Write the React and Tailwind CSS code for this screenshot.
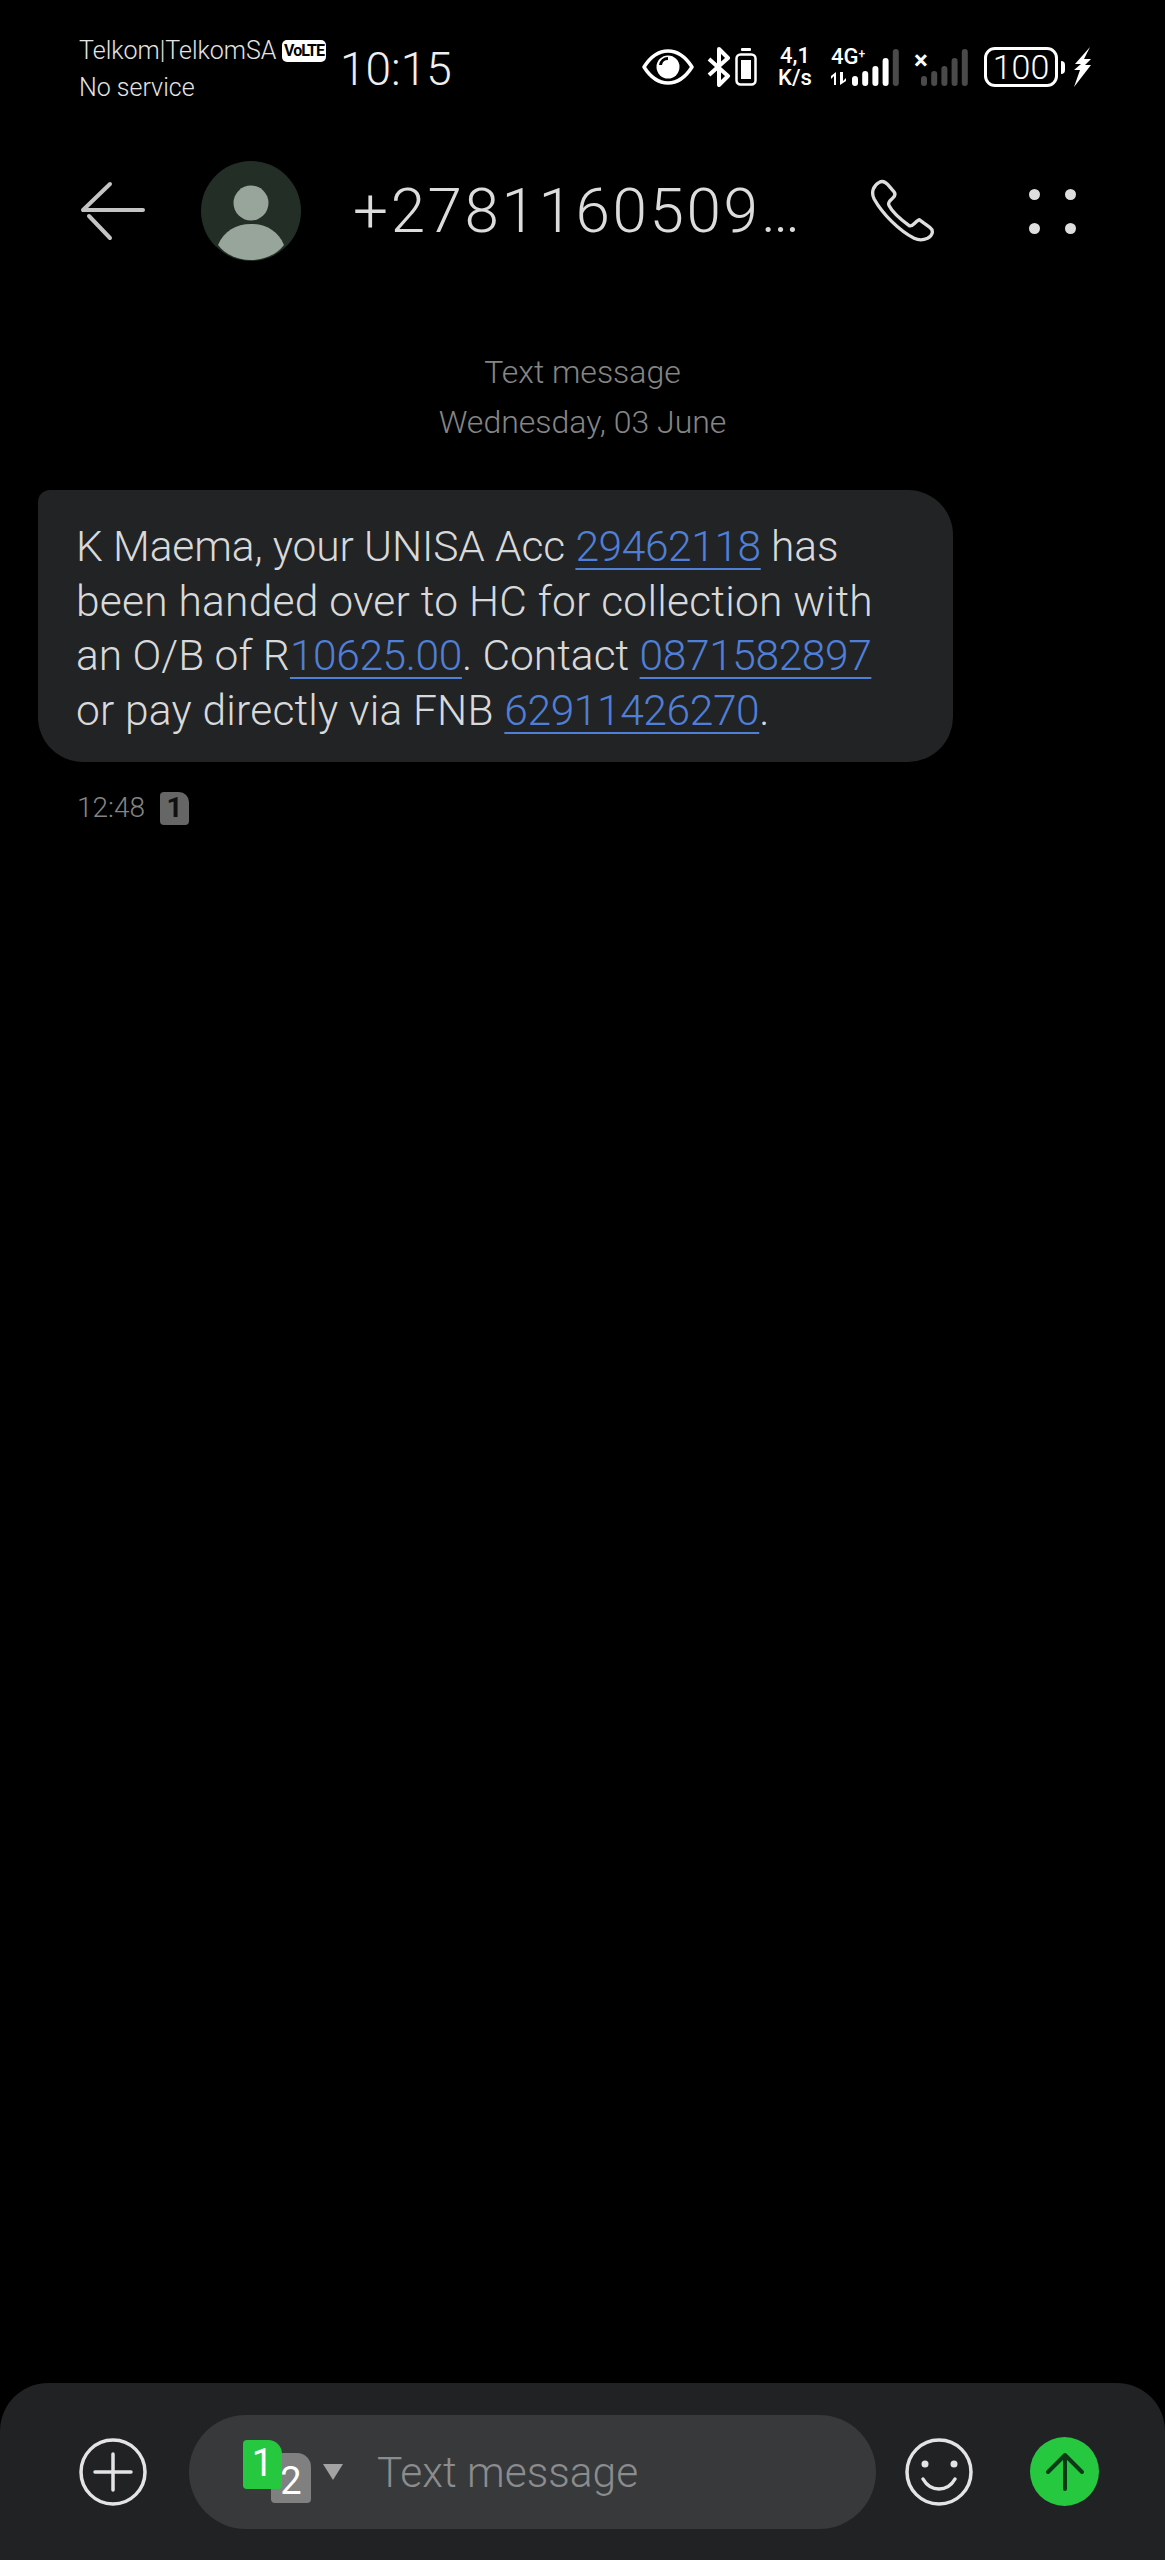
function Eye() {
  return (
    <svg width="52" height="36" viewBox="0 0 52 36" fill="none">
      <path d="M2 18C9 7 17 2 26 2s17 5 24 16c-7 11-15 16-24 16S9 29 2 18Z" stroke="white" strokeWidth="3.5" strokeLinejoin="round" />
      <circle cx="26" cy="18" r="11.5" fill="white" />
      <path d="M17 16a9 9 0 0 1 9-8v3a6 6 0 0 0-6 5Z" fill="black" />
    </svg>
  )
}

function Bluetooth() {
  return (
    <svg width="24" height="40" viewBox="0 0 24 40" fill="none" stroke="white" strokeWidth="4" strokeLinejoin="round">
      <path d="M2 12 21 29 12 38V2l9 9L2 28" />
    </svg>
  )
}

function SmallBattery() {
  return (
    <svg width="22" height="38" viewBox="0 0 22 38" fill="none">
      <rect x="6" y="0" width="10" height="3" rx="1" fill="white" />
      <rect x="1.5" y="6.5" width="19" height="30" rx="4" stroke="white" strokeWidth="2.5" />
      <rect x="6" y="12" width="10" height="19" fill="white" />
    </svg>
  )
}

function Bars({ lit }) {
  const tops = [27, 22, 17, 9, 0]
  return (
    <svg width="47" height="37" viewBox="0 0 47 37">
      {tops.map((top, i) => (
        <rect
          key={i}
          x={i * 10.2}
          y={top}
          width="6"
          height={37 - top}
          rx="3"
          fill={i < lit ? 'white' : '#4a4a4a'}
        />
      ))}
    </svg>
  )
}

function Bolt() {
  return (
    <svg width="19" height="40" viewBox="0 0 19 40" fill="white">
      <path d="M17 0 2 17h6l-7 6h6L1 40l17-22h-6l6-6h-7Z" />
    </svg>
  )
}

function StatusBar() {
  return (
    <div className="flex h-[140px] items-start pt-[32px] pl-[79px] text-white">
      <div className="w-[261px] text-[25px] leading-[37px] font-light text-[#e4e4e4]">
        <div className="flex items-center">
          <span className="w-[203px] whitespace-nowrap">Telkom|TelkomSA</span>
          <span className="flex h-[22px] w-[44px] items-center justify-center rounded-[5px] bg-white text-[16px] leading-none font-bold tracking-[-1px] text-black">
            VoLTE
          </span>
        </div>
        <div>No service</div>
      </div>
      <div className="w-[302px] pt-[8px] text-[46px] leading-[58px] font-light text-[#efefef]">10:15</div>
      <div className="flex h-[48px] items-center pt-[22px]">
        <Eye />
        <div className="ml-[13px]"><Bluetooth /></div>
        <div className="ml-[4px]"><SmallBattery /></div>
        <div className="ml-[19px] w-[38px] text-center text-[22px] leading-[22px] font-medium">
          <div>4,1</div>
          <div>K/s</div>
        </div>
        <div className="relative ml-[17px] flex h-[38px] w-[68px] items-end justify-end">
          <span className="absolute top-[-2px] left-0 text-[22px] leading-none font-medium">
            4G<sup className="text-[12px]">+</sup>
          </span>
          <svg className="absolute bottom-[1px] left-0" width="18" height="13" viewBox="0 0 18 13" fill="white">
            <path d="M5 0v13H3V4L0 7V4ZM9 0h3v9l3-3v3l-6 4Z" />
          </svg>
          <Bars lit={4} />
        </div>
        <div className="relative ml-[22px] flex h-[38px] items-end">
          <span className="absolute top-[-1px] left-[-7px] text-[26px] leading-none font-bold">×</span>
          <Bars lit={0} />
        </div>
        <div className="ml-[16px] flex h-[40px] w-[74px] items-center justify-center rounded-[11px] border-[3px] border-white text-[34px] font-light">
          100
        </div>
        <div className="ml-[3px] h-[13px] w-[4px] rounded-r-sm bg-white" />
        <div className="ml-[8px]"><Bolt /></div>
      </div>
    </div>
  )
}

function Header() {
  return (
    <div className="flex h-[142px] items-center pl-[80px]">
      <svg width="66" height="60" viewBox="0 0 66 60" fill="none" stroke="#c4c4c4" strokeWidth="4" strokeLinecap="round">
        <path d="M3 29 30 3M3 29h60M9 35l21 22" />
      </svg>
      <svg className="ml-[55px]" width="100" height="100" viewBox="0 0 100 100">
        <circle cx="50" cy="50" r="50" fill="#232f26" />
        <circle cx="50" cy="42" r="17.5" fill="#98a59b" />
        <path d="M17 84c6-14 18-21 33-21s27 7 33 21c-8 10-20 15-33 15s-25-5-33-15Z" fill="#98a59b" />
      </svg>
      <div className="ml-[52px] w-[475px] text-[62px] leading-none font-light tracking-[2.6px] whitespace-nowrap text-[#dcdcdc]">
        +2781160509…
      </div>
      <svg className="ml-[41px]" width="67" height="65" viewBox="0 0 200 195" fill="none" stroke="#dedede" strokeWidth="10" strokeLinejoin="round">
        <path d="M30 10C40 4 50 10 56 17L74 38C80 45 78 50 72 56L62 66C58 72 56 74 60 80C70 100 100 125 120 140C130 145 135 130 150 122L182 145C195 155 190 170 175 178C160 185 150 185 135 178C90 155 40 105 15 60C5 40 12 20 30 10Z" />
      </svg>
      <div className="ml-[93px] grid grid-cols-2 gap-x-[25px] gap-y-[23px]">
        <div className="h-[11px] w-[11px] rounded-full bg-[#dedede]" />
        <div className="h-[11px] w-[11px] rounded-full bg-[#dedede]" />
        <div className="h-[11px] w-[11px] rounded-full bg-[#dedede]" />
        <div className="h-[11px] w-[11px] rounded-full bg-[#dedede]" />
      </div>
    </div>
  )
}

function Link({ children }) {
  return <span className="tracking-[-0.4px] text-[#4f7fd6] underline decoration-2 underline-offset-[7px]">{children}</span>
}

function Message() {
  return (
    <div className="flex-1">
      <div className="pt-[65px] text-center text-[32px] leading-[50px] font-light text-[#858585]">
        <div>Text message</div>
        <div>Wednesday, 03 June</div>
      </div>
      <div className="mt-[43px] ml-[38px] w-[915px] rounded-[45px] rounded-tl-[12px] bg-[#222325] pt-[30px] pr-[20px] pb-[24px] pl-[38px] text-[42.5px] leading-[54.6px] font-light text-[#d8d9da]">
        <div className="tracking-[-0.1px] whitespace-nowrap">K Maema, your UNISA Acc <Link>29462118</Link> has</div>
        <div className="tracking-[0.24px] whitespace-nowrap">been handed over to HC for collection with</div>
        <div className="whitespace-nowrap">an O/B of R<Link>10625.00</Link>. Contact <Link>0871582897</Link></div>
        <div className="tracking-[0.2px] whitespace-nowrap">or pay directly via FNB <Link>62911426270</Link>.</div>
      </div>
      <div className="mt-[28px] flex h-[36px] items-center pl-[77px] text-[28px] font-light text-[#858585]">
        <span className="w-[83px]">12:48</span>
        <span className="flex h-[33px] w-[29px] items-center justify-center rounded-[4px] rounded-tr-[10px] bg-[#666666] text-[28px] leading-none font-bold text-[#101010]">
          1
        </span>
      </div>
    </div>
  )
}

function Composer() {
  return (
    <div className="flex h-[177px] items-center rounded-t-[48px] bg-[#212224] pl-[79px]">
      <svg width="68" height="68" viewBox="0 0 68 68" fill="none" stroke="#e4e4e4" strokeLinecap="round">
        <circle cx="34" cy="34" r="32" strokeWidth="3.5" />
        <path d="M34 16v36M16 34h36" strokeWidth="3.5" />
      </svg>
      <div className="ml-[42px] flex h-[114px] w-[687px] items-center rounded-full bg-[#38393b] pl-[54px]">
        <div className="relative h-[63px] w-[68px]">
          <span className="absolute top-[13px] left-[28px] flex h-[50px] w-[40px] items-end justify-center rounded-[4px] rounded-tr-[14px] bg-[#808080] text-[38px] leading-[44px] text-white">
            2
          </span>
          <span className="absolute top-0 left-0 flex h-[49px] w-[39px] items-start justify-center rounded-[4px] rounded-tr-[14px] bg-[#26c840] text-[38px] leading-[46px] text-white">
            1
          </span>
        </div>
        <svg className="ml-[11px]" width="22" height="16" viewBox="0 0 22 16" fill="#a3a3a3">
          <path d="M1 0h20L11 16Z" />
        </svg>
        <span className="ml-[33px] pt-[4px] text-[42.5px] leading-none font-light whitespace-nowrap text-[#8b8c8d]">Text message</span>
      </div>
      <svg className="ml-[29px]" width="68" height="68" viewBox="0 0 68 68" fill="none" stroke="#e4e4e4" strokeLinecap="round">
        <circle cx="34" cy="34" r="32" strokeWidth="3.5" />
        <circle cx="20" cy="26" r="3.5" fill="#e4e4e4" stroke="none" />
        <circle cx="49" cy="26" r="3.5" fill="#e4e4e4" stroke="none" />
        <path d="M18 41c4 7 9 10 16 10s12-3 16-10" strokeWidth="3.5" />
      </svg>
      <div className="ml-[57px] flex h-[69px] w-[69px] items-center justify-center rounded-full bg-[#26c840]">
        <svg width="40" height="40" viewBox="0 0 40 40" fill="none" stroke="#0d3a16" strokeWidth="4" strokeLinecap="round" strokeLinejoin="round">
          <path d="M20 37V3M3 20 20 3l17 17" />
        </svg>
      </div>
    </div>
  )
}

export default function App() {
  return (
    <div className="flex h-[2560px] w-[1165px] flex-col overflow-hidden bg-black font-['Roboto',sans-serif]">
      <StatusBar />
      <Header />
      <Message />
      <Composer />
    </div>
  )
}
